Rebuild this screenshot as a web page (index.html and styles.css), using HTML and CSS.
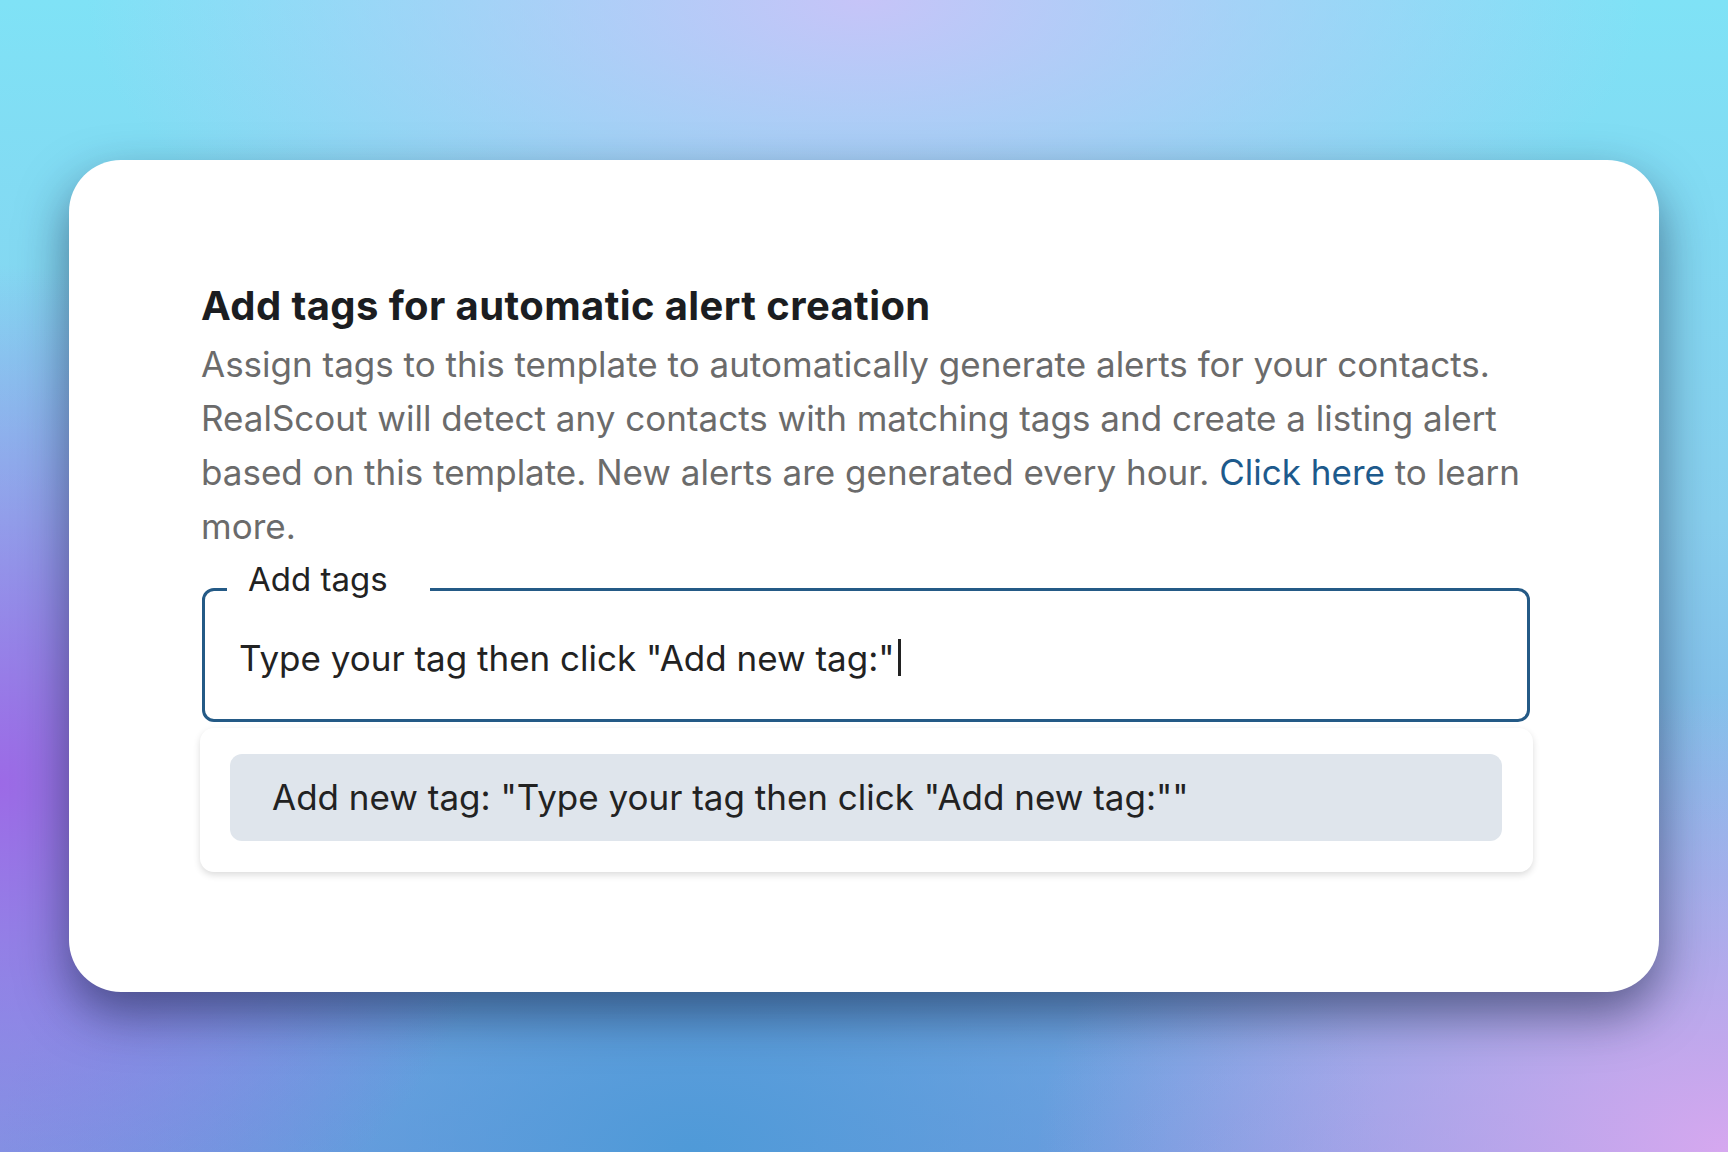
FILE: index.html
```html
<!DOCTYPE html>
<html lang="en">
<head>
    <meta charset="UTF-8">
    <meta name="viewport" content="width=device-width, initial-scale=1.0">
    <title>Alert template tags</title>
    <link rel="stylesheet" href="styles.css">
</head>
<body>
    <div class="card">
        <h2 class="title">Add tags for automatic alert creation</h2>
        <p class="desc">Assign tags to this template to automatically generate alerts for your contacts. RealScout will detect any contacts with matching tags and create a listing alert based on this template. New alerts are generated every hour. <a href="#">Click here</a> to learn more.</p>
        <fieldset class="tag-field">
            <legend>Add tags</legend>
            <div class="tag-input">Type your tag then click "Add new tag:"<span class="caret"></span></div>
        </fieldset>
        <div class="menu">
            <div class="option">Add new tag: "Type your tag then click "Add new tag:""</div>
        </div>
    </div>
</body>
</html>
```

FILE: styles.css
```css
body {
    margin: 0;
    height: 100vh;
    overflow: hidden;
    font-family: Inter, 'Noto Sans', sans-serif;
    background:
        radial-gradient(ellipse 45% 30% at 50% 0%, #c6c4f8 0%, rgba(198, 196, 248, 0) 100%),
        radial-gradient(ellipse 30% 45% at 0% 68%, #9c6ae6 0%, rgba(156, 106, 230, 0) 100%),
        radial-gradient(ellipse 40% 40% at 100% 100%, #d6a8ef 0%, rgba(214, 168, 239, 0) 100%),
        radial-gradient(ellipse 40% 40% at 40% 100%, #4f9ad8 0%, rgba(79, 154, 216, 0) 100%),
        linear-gradient(180deg, #7fe2f6 0%, #88cfee 45%, #7a9fe2 100%);
}

.card {
    box-sizing: border-box;
    width: 1590px;
    height: 832px;
    margin: 160px 0 0 69px;
    padding: 122px 129px 0 133px;
    background-color: #fff;
    border-radius: 52px;
    box-shadow: 0 22px 50px rgba(16, 28, 60, 0.55);
}

.title {
    margin: 0 0 0 -1px;
    font-size: 40px;
    line-height: 48px;
    font-weight: 700;
    letter-spacing: 0.4px;
    color: #1b1d21;
}

.desc {
    margin: 7px 0 0 -1px;
    font-size: 35px;
    line-height: 54px;
    color: #6b6b6b;
}

.desc a {
    color: #1d5a8c;
    text-decoration: none;
}

.tag-field {
    margin: 6px 0 0;
    padding: 0;
    border: 3px solid #245a86;
    border-radius: 12px;
}

.tag-field legend {
    margin-left: 22px;
    padding: 0 42px 20px 21px;
    font-size: 33px;
    line-height: 40px;
    color: #222;
}

.tag-input {
    padding: 19px 34px 41px;
    font-size: 35px;
    line-height: 40px;
    color: #222;
}

.caret {
    display: inline-block;
    width: 3px;
    height: 37px;
    margin-left: 3px;
    vertical-align: -5px;
    background-color: #222;
}

.menu {
    margin: 6px 0 0 -2px;
    width: 1333px;
    box-sizing: border-box;
    padding: 26px 31px 31px 30px;
    background-color: #fff;
    border-radius: 14px;
    box-shadow: 0 3px 7px rgba(0, 0, 0, 0.14);
}

.option {
    height: 87px;
    padding-left: 42px;
    font-size: 35px;
    line-height: 87px;
    color: #222;
    background-color: #dfe5ec;
    border-radius: 12px;
}
```
